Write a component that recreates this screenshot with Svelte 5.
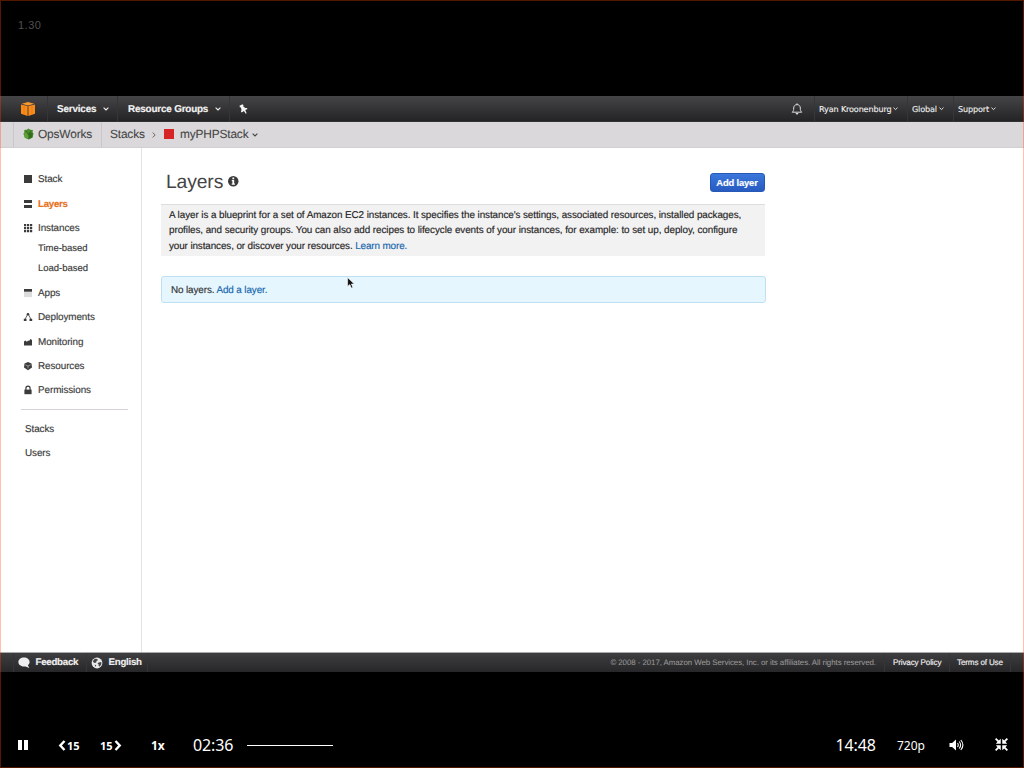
<script>
  const menu = [
    { icon: 'stack', label: 'Stack', h: 25 },
    { icon: 'layers', label: 'Layers', h: 24, active: true },
    { icon: 'instances', label: 'Instances', h: 20.5 },
    { label: 'Time-based', h: 20.5, sub: true },
    { label: 'Load-based', h: 24, sub: true },
    { icon: 'apps', label: 'Apps', h: 24.3 },
    { icon: 'deployments', label: 'Deployments', h: 24.3 },
    { icon: 'monitoring', label: 'Monitoring', h: 24.3 },
    { icon: 'resources', label: 'Resources', h: 24.3 },
    { icon: 'permissions', label: 'Permissions', h: 24.8 }
  ];
  const account = ['Ryan Kroonenburg', 'Global', 'Support'];
</script>

{#snippet caret(cls)}
  <svg class="caret {cls}" viewBox="0 0 6 4"><path d="M.6.7 3 3 5.4.7" fill="none" stroke="currentColor" stroke-width="1.1" /></svg>
{/snippet}

{#snippet menuIcon(name)}
  <svg class="micon" viewBox="0 0 10 10" fill="#3b3b3b">
    {#if name === 'stack'}
      <path d="M1 1h8v8H1z" />
    {:else if name === 'layers'}
      <path d="M1 1h8v3H1zM1 6h8v3H1z" />
    {:else if name === 'instances'}
      <path d="M1 1h2.200v2.200H1zM4 1h2.200v2.200H4zM7 1h2.200v2.200H7zM1 4h2.200v2.200H1zM4 4h2.200v2.200H4zM7 4h2.200v2.200H7zM1 7h2.200v2.200H1zM4 7h2.200v2.200H4zM7 7h2.200v2.200H7z" />
    {:else if name === 'apps'}
      <path d="M1 3.500h8v5.600H1z" fill="#dcdcdc" /><path d="M1 1h8v2.700H1z" />
    {:else if name === 'deployments'}
      <path d="M4.500 2.600 2 7.300M5.500 2.600 8 7.300" fill="none" stroke="#555" stroke-width=".9" />
      <circle cx="5" cy="2.200" r="1.300" /><path d="M.8 6.700h2.700v2.400H.8zM6.500 6.700h2.700v2.400H6.500z" />
    {:else if name === 'monitoring'}
      <path d="M1 8.600V4.500l1.300-1 1.600 1.200L5.200 3.500l.8.500 1.400-2L9 3v5.600z" />
    {:else if name === 'resources'}
      <path d="M5 .9 8.500 2.400 9 6.600 5 9.200 1 6.600 1.500 2.400z" /><path d="M2.300 3.800 5 5l2.700-1.200M5 5v2.500" fill="none" stroke="#bbb" stroke-width=".7" />
    {:else}
      <path d="M1.400 4.600h7.200v4.600H1.400z" /><path d="M2.900 5V3.200a2.100 2.100 0 0 1 4.200 0V5" fill="none" stroke="#3b3b3b" stroke-width="1.200" />
    {/if}
  </svg>
{/snippet}

<div class="player">
  <div class="top"><span>1.30</span></div>

  <div class="screen">
    <nav class="nav">
      <svg class="cube" viewBox="0 0 14 14">
        <path d="M7 0 13.300 1.800 7 3.500.7 1.800z" fill="#f7982f" />
        <path d="M0 2.500 6.600 4v10L0 11.800zM14 2.500 7.400 4v10L14 11.800z" fill="#f98b1d" />
        <path d="M3.100 3.300v9.400M10.900 3.300v9.400" stroke="#d9730d" stroke-width=".5" />
      </svg>
      <div class="cell services"><b>Services</b>{@render caret('')}</div>
      <div class="cell groups"><b>Resource Groups</b>{@render caret('')}</div>
      <div class="cell pin">
        <svg viewBox="0 0 10 10"><path d="M1.500 1.800 4.500.3 5.500 1.300 5.300 2.500 7.300 3.900 8.900 3.900 9.500 5.100 7.300 6.100 8.600 9.300 7.800 9.700 5.900 7 3.700 8.600 2.900 7.600 3.500 5.900 2.900 3.600 1.900 3.300z" fill="#f4f4f4" /></svg>
      </div>
      <svg class="bell" viewBox="0 0 12 12"><path d="M1.200 9.200c1.200-1 1.500-2 1.500-4.200C2.700 3 4 1.600 6 1.600S9.300 3 9.300 5c0 2.200.3 3.200 1.500 4.200zM6 .3v1.300" fill="none" stroke="#ddd" /><path d="M4.600 10h2.800q-.2 1.500-1.400 1.500T4.600 10" fill="#ddd" /></svg>
      <div class="account">
        {#each account as item, i}
          <div class="cell a{i}"><span>{item}</span>{@render caret('small')}</div>
        {/each}
      </div>
    </nav>

    <div class="crumbs">
      <div class="service">
        <svg class="ops" viewBox="0 0 12 12">
          <path d="M6 0 8 1.300 10.800 1.600 10.500 4 11.600 6 10.500 8 10.200 10 6 12 2 10 1.500 8 .4 6 1.500 4 1.300 1.600 4 1.300z" fill="#4c8d2b" />
          <path d="M6 4v7.800L1.500 9.500V5z" fill="#60a038" /><path d="M6 4v7.800l4.500-2.300V5z" fill="#356f1b" /><path d="M3 2.500 6 7l3-4.500" fill="none" stroke="#2d6418" stroke-width=".9" />
        </svg>
        <span>OpsWorks</span>
      </div>
      <div class="path">
        <span class="stacks">Stacks</span>
        <svg class="gt" viewBox="0 0 4 6"><path d="M.7.5 3.200 3 .7 5.500" fill="none" stroke="#666" /></svg>
        <i class="red"></i>
        <span class="mystack">myPHPStack</span>
        {@render caret('')}
      </div>
    </div>

    <div class="body">
      <aside>
        {#each menu as m}
          <div class="row" class:active={m.active} class:sub={m.sub} style="height:{m.h}px">
            <span class="slot">{#if m.icon}{@render menuIcon(m.icon)}{/if}</span><span>{m.label}</span>
          </div>
        {/each}
        <hr />
        <div class="plain">Stacks</div>
        <div class="plain">Users</div>
      </aside>
      <main>
        <header>
          <h1>Layers</h1>
          <svg class="info" viewBox="0 0 10 10"><circle cx="5" cy="5" r="5" fill="#3a3a3a" /><path d="M4.200 1.500h1.700v1.500H4.200zM3.600 3.900h2.300v3.200h.7v1.200H3.500V7.100h.7V5h-.6z" fill="#fff" /></svg>
          <button>Add layer</button>
        </header>
        <p class="about">
          <span class="l1">A layer is a blueprint for a set of Amazon EC2 instances. It specifies the instance's settings, associated resources, installed packages,</span><br />
          <span class="l2">profiles, and security groups. You can also add recipes to lifecycle events of your instances, for example: to set up, deploy, configure</span><br />
          <span class="l3">your instances, or discover your resources. <a>Learn more.</a></span>
        </p>
        <div class="notice">No layers. <a>Add a layer.</a></div>
      </main>
    </div>

    <footer>
      <div class="fcell feedback">
        <svg viewBox="0 0 12 12"><path d="M6 .6c3.200 0 5.600 1.900 5.600 4.400 0 1.400-.7 2.400-1.700 3.200l1.400 2.900-3.700-1.600C3.700 10 .4 8.100.4 5 .4 2.500 2.800.6 6 .6z" fill="#eee" /></svg>
        <b>Feedback</b>
      </div>
      <div class="fcell english">
        <svg viewBox="0 0 12 12"><circle cx="6" cy="6" r="5.400" fill="#e8e8e8" /><path d="M2.500 3 4 1.800l2.300.3L6.800 3.300 5.500 4 5.200 5.400 3.700 6 2 5zM7.500 5.500l2.700-.5.200 2L8.800 9.600 7.600 9 7.800 7.500 6.500 6.800zM3.500 7.500l1.700.8-.5 1.700z" fill="#444" /></svg>
        <b>English</b>
      </div>
      <div class="fcell copy">© 2008 - 2017, Amazon Web Services, Inc. or its affiliates. All rights reserved.</div>
      <div class="fcell privacy">Privacy Policy</div>
      <div class="fcell terms">Terms of Use</div>
    </footer>
  </div>

  <div class="controls">
    <svg class="pause" viewBox="0 0 10 10"><path d="M0 0h4v10H0zM6 0h4v10H6z" fill="#fff" /></svg>
    <div class="skip back"><svg viewBox="0 0 7 11"><path d="M6 1 1.800 5.500 6 10" fill="none" stroke="#fff" stroke-width="2.400" /></svg><b>15</b></div>
    <div class="skip fwd"><b>15</b><svg viewBox="0 0 7 11"><path d="M1 1l4.200 4.500L1 10" fill="none" stroke="#fff" stroke-width="2.400" /></svg></div>
    <b class="rate">1x</b>
    <span class="time">02:36</span>
    <i class="track"></i>
    <span class="total">14:48</span>
    <span class="quality">720p</span>
    <svg class="volume" viewBox="0 0 14 12"><path d="M0 4h2.600L6.500.5v11L2.600 8H0z" fill="#fff" /><path d="M8 4q1.500 2 0 4M9.700 2.500q2.800 3.500 0 7M11.300 1q4.200 5 0 10" fill="none" stroke="#fff" stroke-width="1.100" /></svg>
    <svg class="shrink" viewBox="0 0 12 12"><path d="M0 1.200 1.200 0l2.300 2.300L5.300.8v4.500H.8l1.500-1.800zM12 1.200 10.800 0 8.500 2.300 6.700.8v4.500h4.500L9.700 3.500zM0 10.800 1.200 12l2.300-2.300 1.800 1.500V6.700H.8l1.500 1.800zM12 10.800 10.800 12 8.500 9.700l-1.800 1.500V6.700h4.500L9.700 8.500z" fill="#fff" /></svg>
  </div>
  <svg class="pointer" viewBox="0 0 8 12"><path d="M.6.6v8.800L2.800 7.500l1.500 3.600 1.600-.7L4.400 7h2.900z" fill="#111" stroke="#fff" stroke-width=".6" /></svg>
  <div class="frame"></div>
</div>

<style>
  :global(body) { background: #000; overflow: hidden; }
  .player { position: relative; width: 1024px; height: 768px; display: flex; flex-direction: column; background: #000; font-family: "Liberation Sans", Arial, sans-serif; white-space: nowrap; }
  .player * { box-sizing: border-box; }
  svg { display: block; flex: none; }
  .frame { position: absolute; inset: 0; border: 1px solid rgba(255, 69, 0, .33); pointer-events: none; }
  .pointer { position: absolute; left: 347px; top: 277px; width: 8px; height: 12px; }
  .top { height: 96px; padding: 18px; font-size: 11px; line-height: 15px; letter-spacing: .5px; color: #505050; }
  .screen { height: 576px; display: flex; flex-direction: column; background: #fff; color: #333; text-rendering: geometricPrecision; -webkit-text-stroke: .16px; }
  .nav { height: 26px; flex: none; display: flex; align-items: center; padding-left: 21px; background: linear-gradient(#454446, #242325); color: #f2f2f2; border-bottom: 1px solid #333; }
  .cube { width: 14px; height: 14px; margin-right: 12px; }
  .cell { height: 25px; display: flex; align-items: center; border-left: 1px solid #363537; }
  .cell b { padding-top: 1px; }
  .caret { width: 6px; height: 4px; margin-top: 1px; }
  .caret.small { width: 5px; height: 3.500px; }
  .services { width: 70px; padding-left: 9px; font-size: 9.900px; letter-spacing: -.16px; }
  .services .caret, .groups .caret { margin-left: 7px; }
  .groups { width: 112px; padding-left: 10px; font-size: 9.900px; letter-spacing: -.18px; }
  .pin { width: 40px; padding-left: 8px; }
  .pin svg { width: 10px; height: 10px; }
  .bell { width: 12px; height: 12px; margin-left: auto; }
  .account { display: flex; margin-left: 11px; width: 210px; font: 8.100px "DejaVu Sans", sans-serif; letter-spacing: -.15px; -webkit-text-stroke: .1px; }
  .account .cell { padding-left: 4px; gap: 2px; }
  .a0 { width: 93px; } .a1 { width: 46px; }
  .crumbs { height: 26px; flex: none; display: flex; align-items: center; padding-left: 13px; background: #dad8db; font-size: 11.900px; letter-spacing: -.16px; color: #444; border-bottom: 1px solid #d1cfd2; -webkit-text-stroke: .08px; }
  .service { width: 89px; height: 25px; display: flex; align-items: center; padding-left: 9px; border: solid #c8c6c9; border-width: 0 1px; }
  .crumbs span { position: relative; top: -.5px; }
  .ops { width: 11px; height: 12px; margin: -1px 4px 0 0; }
  .path { display: flex; align-items: center; padding-left: 8px; }
  .stacks { width: 42px; } .gt { width: 4px; height: 6px; margin-right: 8px; }
  .red { width: 10px; height: 10px; background: #d72427; margin: -1px 6px 0 0; }
  .mystack { width: 72px; }
  .body { height: 504px; flex: none; display: flex; }
  aside { width: 142px; border-right: 1px solid #e4e2e5; padding: 19px 13px 0 21px; font-size: 9.900px; letter-spacing: -.08px; color: #3b3b3b; }
  .row { display: flex; align-items: flex-start; }
  .row span { line-height: 25px; }
  .row.sub { font-size: 9.500px; letter-spacing: -.02px; }
  .row.sub span { line-height: 24px; }
  .row .slot { width: 17px; height: 24px; flex: none; padding: 7px 0 0 2px; }
  .micon { width: 10px; height: 10px; }
  .active { color: #e8701a; font-weight: bold; font-size: 9.700px; letter-spacing: -.25px; }
  hr { margin: 6px 0 7px; border: 0; height: 1px; background: #d8d2da; }
  .plain { height: 24.500px; line-height: 26px; padding-left: 4px; }
  main { width: 624px; padding: 18px 0 0 19px; }
  header { height: 38px; display: flex; align-items: flex-start; padding-left: 5px; }
  h1 { margin: 0; width: 62px; font-size: 19.300px; letter-spacing: -.12px; line-height: 33px; font-weight: 400; color: #444; -webkit-text-stroke: 0; }
  .info { width: 10.500px; height: 10.500px; margin-top: 10px; }
  button { margin: 7px 1.500px 0 auto; width: 55px; height: 19px; padding: 0 0 1px; border: 1px solid #2659b5; border-radius: 3px; background: linear-gradient(#3b77da, #275bc2); color: #fff; font: bold 9.400px "Liberation Sans", sans-serif; letter-spacing: -.15px; }
  .about { margin: 0; width: 604px; height: 52px; padding: 3px 0 0 8px; border-top: 1px solid #dedcdf; background: #f3f2f3; font-size: 9.900px; line-height: 15.300px; color: #252525; }
  .l1 { letter-spacing: -.08px; } .l2 { letter-spacing: -.065px; } .l3 { letter-spacing: -.11px; }
  a { color: #1666ac; }
  .notice { margin-top: 20px; height: 27px; border: 1px solid #bfe0f2; border-radius: 3px; background: #e6f6ff; padding-left: 9px; font-size: 9.900px; letter-spacing: -.11px; line-height: 27px; }
  footer { height: 20px; margin-top: auto; display: flex; border-top: 1px solid #aaa; background: linear-gradient(#3e3d3f, #272628); color: #eee; padding-left: 13px; }
  .fcell { border-left: 1px solid #363537; display: flex; align-items: center; font-size: 8.100px; letter-spacing: -.15px; }
  .fcell b { font-size: 9.700px; letter-spacing: -.25px; }
  .fcell svg { width: 12px; height: 12px; margin-right: 5.500px; }
  .feedback { width: 73px; padding-left: 4px; } .english { width: 61px; padding-left: 4px; }
  .copy { width: 737px; justify-content: flex-end; padding-right: 8px; color: #999; font-size: 7.900px; letter-spacing: -.06px; -webkit-text-stroke: .05px; }
  .privacy { width: 65px; padding-left: 8px; } .terms { width: 62px; padding-left: 7px; border-right: 1px solid #363537; }
  .controls { height: 96px; display: flex; align-items: center; padding: 50px 0 0 18px; color: #fff; font-family: "Noto Sans", sans-serif; }
  .controls > * { flex: none; }
  .pause { width: 10px; height: 10px; margin: -1px 30px 0 0; }
  .skip { display: flex; align-items: center; font-size: 11px; width: 42px; gap: 1px; }
  .skip svg { width: 8px; height: 11px; }
  .rate { width: 43px; padding-left: 9px; font-size: 12px; }
  .time { width: 62px; padding-left: 8px; font-size: 16px; letter-spacing: -.1px; }
  .track { width: 86px; height: 1px; background: #fff; }
  .total { margin-left: auto; width: 61.500px; font-size: 16px; letter-spacing: -.1px; }
  .quality { width: 52px; font-size: 12px; }
  .volume { width: 15px; height: 12px; margin: -1px 31px 0 0; }
  .shrink { width: 13px; height: 13px; margin: -1px 16px 0 0; }
</style>
